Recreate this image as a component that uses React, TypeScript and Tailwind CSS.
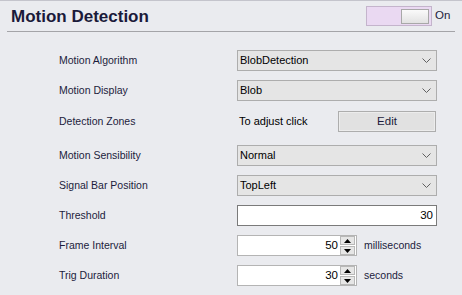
import React from "react";

const FONT = { fontFamily: '"Liberation Sans", Arial, sans-serif' };

function Chevron() {
  return (
    <svg width="9" height="5" viewBox="0 0 9 5" className="shrink-0">
      <path d="M0.5 0.5 L4.5 4.5 L8.5 0.5" fill="none" stroke="#606060" strokeWidth="1" />
    </svg>
  );
}

function Select({ value }: { value: string }) {
  return (
    <div className="flex h-[21px] w-[200px] items-center justify-between border border-[#adadad] bg-[#e5e5e5] pl-[2px] pr-[5px] text-[11px] text-black">
      <span>{value}</span>
      <Chevron />
    </div>
  );
}

function Spinner({ value }: { value: string }) {
  return (
    <div className="flex h-[21px] w-[120px] items-center border border-[#b4b4b4] bg-white pr-[1px]">
      <span className="flex-1 pr-[2px] text-right text-[11.5px] text-black">{value}</span>
      <div className="flex h-[19px] w-[15px] flex-col gap-[1px]">
        <div className="flex flex-1 items-center justify-center border border-[#b8b8b8] bg-[#e6e6e6]">
          <svg width="7" height="4" viewBox="0 0 7 4">
            <path d="M0 4 L3.5 0 L7 4 Z" fill="#000" />
          </svg>
        </div>
        <div className="flex flex-1 items-center justify-center border border-[#b8b8b8] bg-[#e6e6e6]">
          <svg width="7" height="4" viewBox="0 0 7 4">
            <path d="M0 0 L3.5 4 L7 0 Z" fill="#000" />
          </svg>
        </div>
      </div>
    </div>
  );
}

function Row({ label, children, mt }: { label: string; children: React.ReactNode; mt: string }) {
  return (
    <div className={`flex h-[21px] items-center ${mt}`}>
      <div className="w-[237px] shrink-0 pl-[59px] text-[10.5px] text-[#1c1c3c]">{label}</div>
      <div className="flex items-center">{children}</div>
    </div>
  );
}

export default function App() {
  return (
    <div style={FONT} className="h-[295px] w-[462px] overflow-hidden border-t border-[#c4c4cc] bg-[#eaebef]">
      <div className="mx-[7px] flex h-[31px] items-center justify-between border-b border-[#a4a4a8]">
        <div className="pl-[4px] text-[17px] font-bold leading-none text-[#1a1a3a]">Motion Detection</div>
        <div className="flex items-center pr-[1px]">
          <div className="flex h-[20px] w-[66px] items-center justify-end border border-[#c4b4cc] bg-[#ead9f2] pr-[2px]">
            <div className="h-[15px] w-[28px] border border-[#a8a8a8] bg-gradient-to-b from-[#fafafa] to-[#e2e2e2]" />
          </div>
          <span className="ml-[3px] w-[19px] text-[11.5px] text-[#1c1c3c]">On</span>
        </div>
      </div>

      <div className="pt-[18px]">
        <Row label="Motion Algorithm" mt="mt-0">
          <Select value="BlobDetection" />
        </Row>
        <Row label="Motion Display" mt="mt-[9px]">
          <Select value="Blob" />
        </Row>
        <Row label="Detection Zones" mt="mt-[10px]">
          <span className="w-[101px] pl-[2px] text-[11px] text-black">To adjust click</span>
          <div className="flex h-[21px] w-[98px] items-center justify-center border border-[#adadad] bg-[#e1e1e1] text-[11.5px] text-[#1c1c3c] shadow-[inset_0_0_0_1px_#ececec]">
            Edit
          </div>
        </Row>
        <Row label="Motion Sensibility" mt="mt-[13px]">
          <Select value="Normal" />
        </Row>
        <Row label="Signal Bar Position" mt="mt-[9px]">
          <Select value="TopLeft" />
        </Row>
        <Row label="Threshold" mt="mt-[9px]">
          <div className="flex h-[21px] w-[200px] items-center justify-end border border-[#7a7a7a] bg-white pr-[3px] text-[11.5px] text-black">
            30
          </div>
        </Row>
        <Row label="Frame Interval" mt="mt-[9px]">
          <Spinner value="50" />
          <span className="ml-[7px] text-[10.5px] text-[#1c1c3c]">milliseconds</span>
        </Row>
        <Row label="Trig Duration" mt="mt-[9px]">
          <Spinner value="30" />
          <span className="ml-[7px] text-[10.5px] text-[#1c1c3c]">seconds</span>
        </Row>
      </div>
    </div>
  );
}
